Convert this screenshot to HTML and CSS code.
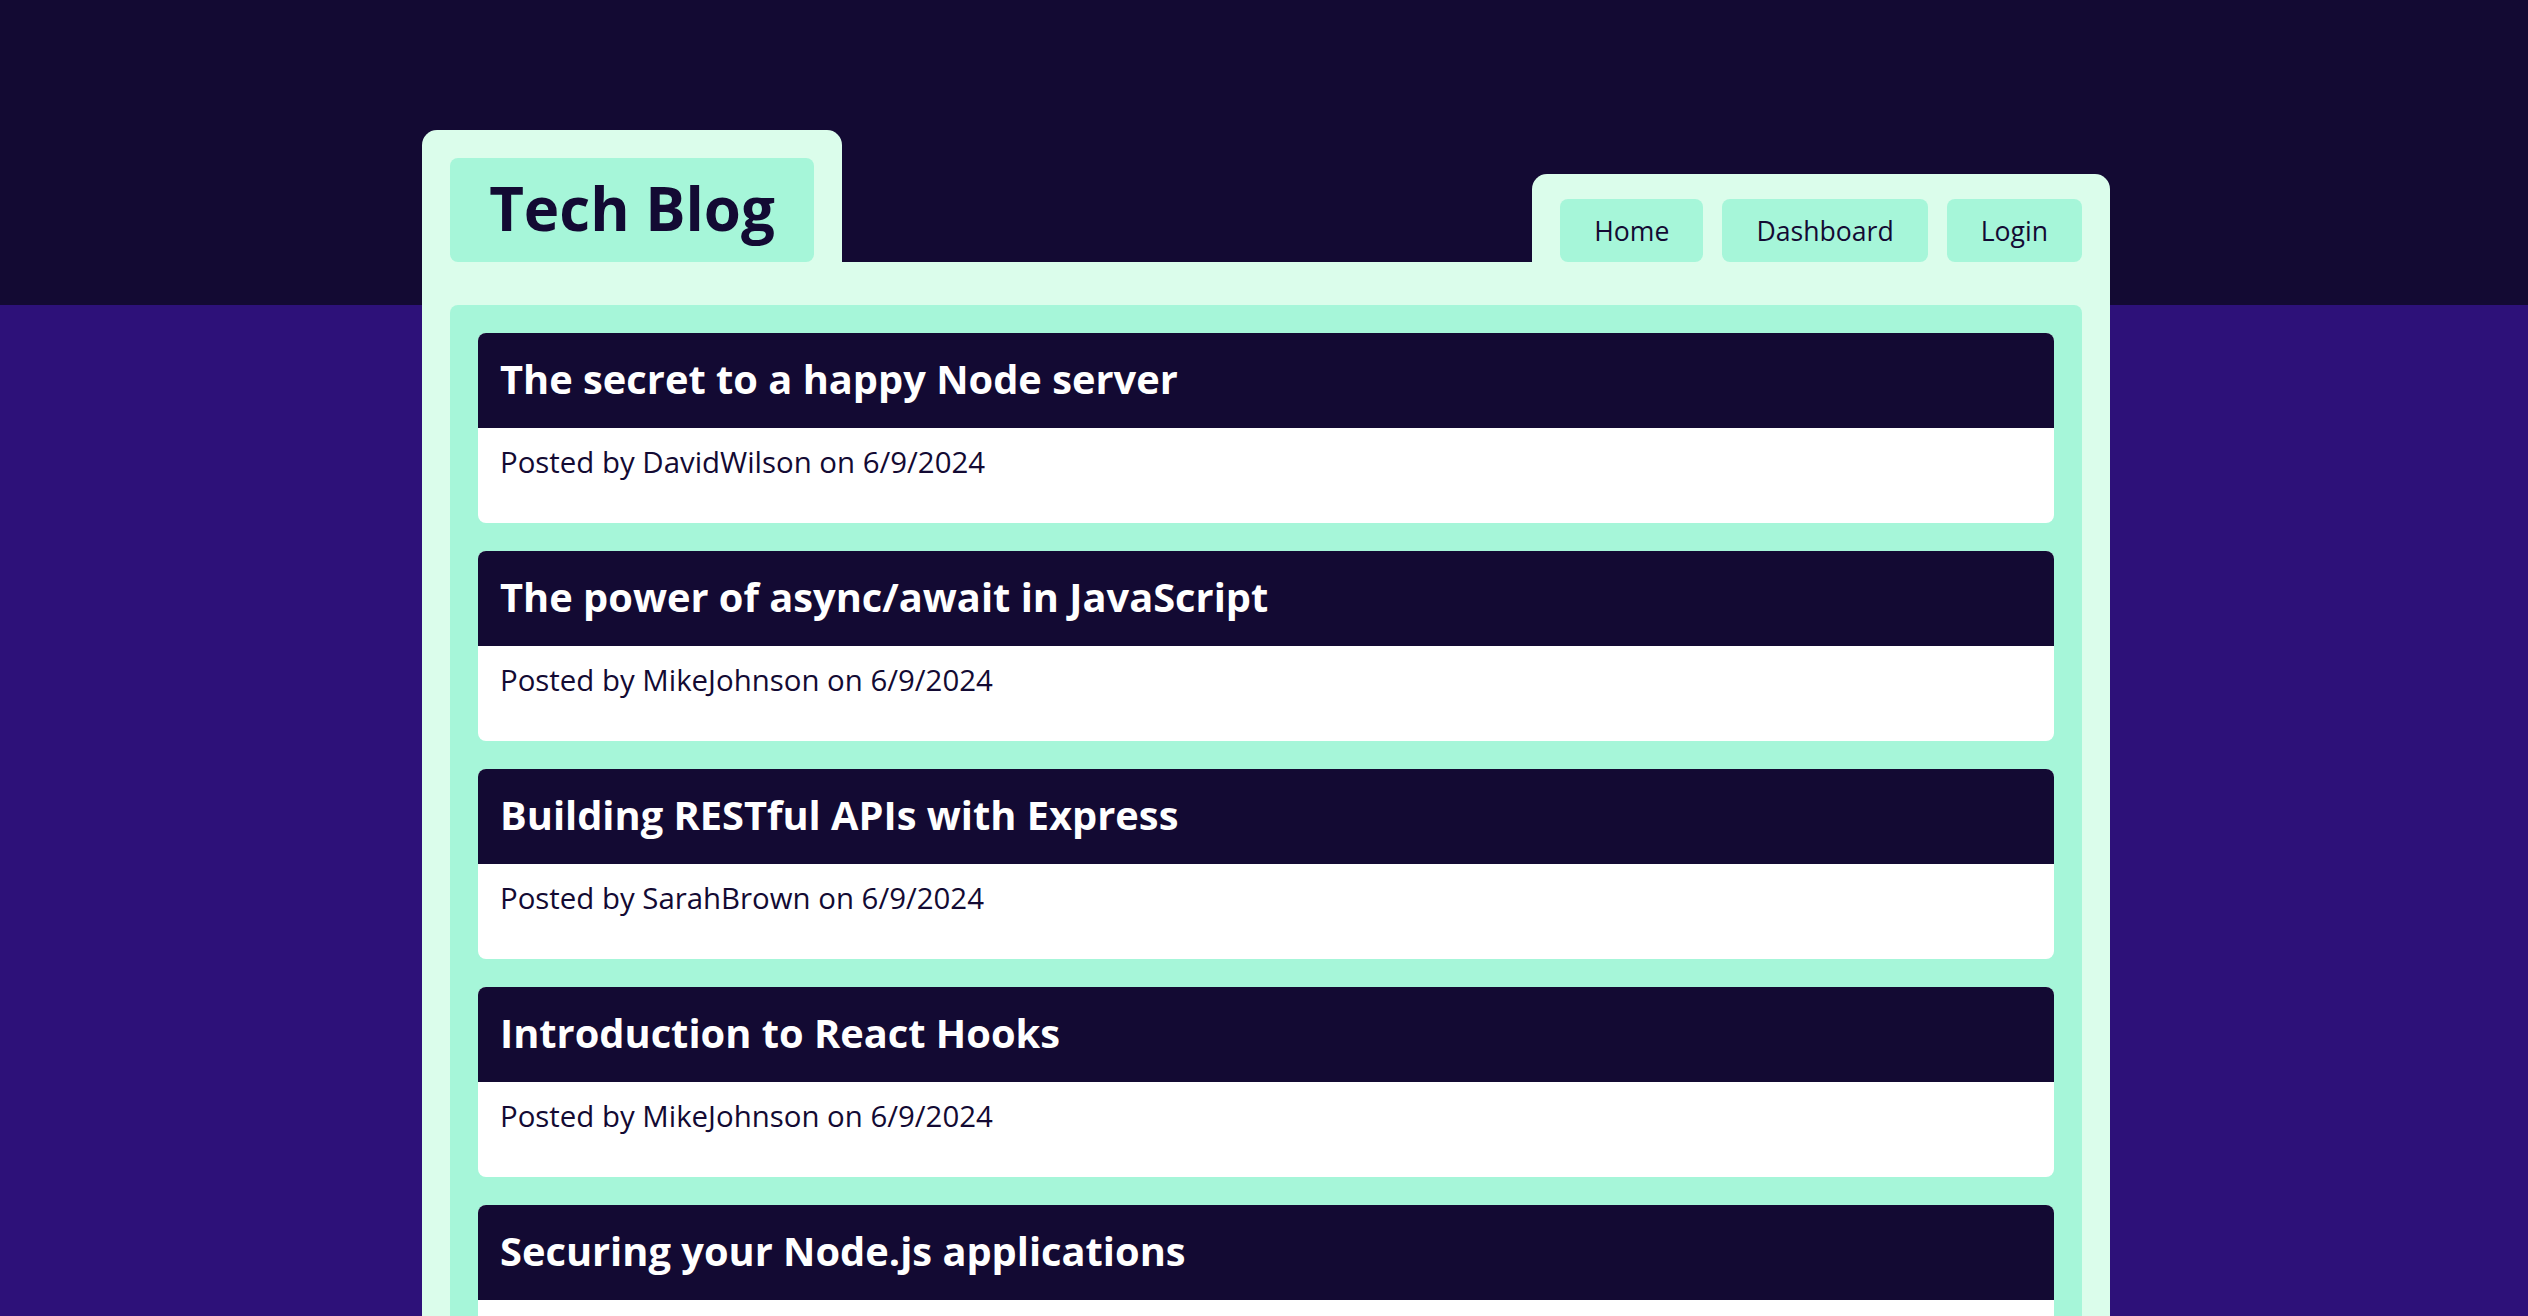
FILE: index.html
```html
<!DOCTYPE html>
<html lang="en">
<head>
<meta charset="utf-8">
<title>Tech Blog</title>
<link rel="stylesheet" href="styles.css">
</head>
<body>
<div class="page">
  <header class="top">
    <div class="brand-tab"><h1 class="brand">Tech Blog</h1></div>
    <nav class="nav-tab">
      <a class="nav-btn" href="#">Home</a>
      <a class="nav-btn" href="#">Dashboard</a>
      <a class="nav-btn" href="#">Login</a>
    </nav>
  </header>
  <main class="panel">
    <section class="posts">
      <article class="post">
        <h2 class="post-title">The secret to a happy Node server</h2>
        <p class="post-meta">Posted by DavidWilson on 6/9/2024</p>
      </article>
      <article class="post">
        <h2 class="post-title">The power of async/await in JavaScript</h2>
        <p class="post-meta">Posted by MikeJohnson on 6/9/2024</p>
      </article>
      <article class="post">
        <h2 class="post-title">Building RESTful APIs with Express</h2>
        <p class="post-meta">Posted by SarahBrown on 6/9/2024</p>
      </article>
      <article class="post">
        <h2 class="post-title">Introduction to React Hooks</h2>
        <p class="post-meta">Posted by MikeJohnson on 6/9/2024</p>
      </article>
      <article class="post">
        <h2 class="post-title">Securing your Node.js applications</h2>
        <p class="post-meta">Posted by DavidWilson on 6/9/2024</p>
      </article>
    </section>
  </main>
</div>
</body>
</html>
```
FILE: styles.css
```css
* { box-sizing: border-box; }
html, body { margin: 0; padding: 0; }
body {
  font-family: "Open Sans", "Noto Sans", sans-serif;
  color: #130a33;
  background: linear-gradient(#130a33 0, #130a33 305px, #2d1179 305px) no-repeat;
  background-color: #2d1179;
  min-height: 100vh;
  padding-left: 4px;
}
.page {
  width: 1688px;
  margin: 0 auto;
  padding-top: 130px;
}
.top {
  display: flex;
  justify-content: space-between;
  align-items: flex-end;
}
.brand-tab {
  background: #dbfdeb;
  border-radius: 15px 15px 0 0;
  padding: 28px 28px 0;
}
.brand {
  margin: 0;
  width: 364px;
  height: 104px;
  background: #a6f6d9;
  border-radius: 8px;
  display: flex;
  align-items: center;
  justify-content: center;
  font-size: 60px;
  font-weight: 700;
  line-height: 1;
  padding-bottom: 4px;
}
.nav-tab {
  background: #dbfdeb;
  border-radius: 15px 15px 0 0;
  padding: 25px 28px 0;
  display: flex;
  gap: 19px;
}
.nav-btn {
  height: 63px;
  padding: 0 34px;
  display: flex;
  align-items: center;
  background: #a6f6d9;
  border-radius: 8px;
  color: #130a33;
  text-decoration: none;
  font-size: 26.6px;
}
.panel {
  background: #dbfdeb;
  padding: 43px 28px 28px;
}
.posts {
  background: #a6f6d9;
  border-radius: 8px;
  padding: 28px;
  display: flex;
  flex-direction: column;
  gap: 28px;
}
.post {
  border-radius: 8px;
  overflow: hidden;
  background: #ffffff;
}
.post-title {
  margin: 0;
  height: 95px;
  display: flex;
  align-items: center;
  padding: 0 22px 4px;
  background: #130a33;
  color: #ffffff;
  font-size: 39.8px;
  font-weight: 700;
}
.post-meta {
  margin: 0;
  height: 95px;
  padding: 14px 22px 0;
  font-size: 29.4px;
  line-height: 40px;
}
```
